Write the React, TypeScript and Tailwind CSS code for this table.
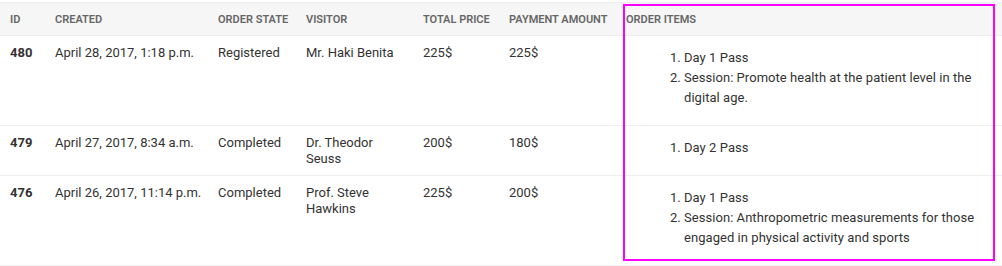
import clsx from 'clsx'

// ─── Data ─────────────────────────────────────────────────────────────────────

interface Order {
  id: number
  created: string
  state: string
  visitor: string
  total: string
  paid: string
  items: string[]
}

const orders: Order[] = [
  {
    id: 480,
    created: 'April 28, 2017, 1:18 p.m.',
    state: 'Registered',
    visitor: 'Mr. Haki Benita',
    total: '225$',
    paid: '225$',
    items: ['Day 1 Pass', 'Session: Promote health at the patient level in the digital age.'],
  },
  {
    id: 479,
    created: 'April 27, 2017, 8:34 a.m.',
    state: 'Completed',
    visitor: 'Dr. Theodor Seuss',
    total: '200$',
    paid: '180$',
    items: ['Day 2 Pass'],
  },
  {
    id: 476,
    created: 'April 26, 2017, 11:14 p.m.',
    state: 'Completed',
    visitor: 'Prof. Steve Hawkins',
    total: '225$',
    paid: '200$',
    items: [
      'Day 1 Pass',
      'Session: Anthropometric measurements for those engaged in physical activity and sports',
    ],
  },
]

const columns = [
  { label: 'Id', w: 'w-[45px]' },
  { label: 'Created', w: 'w-[163px]' },
  { label: 'Order state', w: 'w-[88px]' },
  { label: 'Visitor', w: 'w-[117px]' },
  { label: 'Total price', w: 'w-[86px]' },
  { label: 'Payment amount', w: 'w-[117px]' },
  { label: 'Order items', w: '' },
]

const cell = 'px-[10px] pt-[9px] pb-[7px]'

// ─── Main Component ───────────────────────────────────────────────────────────

export default function App() {
  return (
    <div className="relative w-[1002px] h-[266px] bg-white font-['Roboto',sans-serif] text-[13px] text-[#333]">
      <table className="mt-[2px] w-full table-fixed border-collapse border-t border-[#eee]">
        <colgroup>
          {columns.map((c) => (
            <col key={c.label} className={c.w} />
          ))}
        </colgroup>
        <thead>
          <tr className="bg-[#f6f6f6] border-b border-[#eee]">
            {columns.map((c) => (
              <th
                key={c.label}
                className={clsx(cell, 'text-left text-[11px] leading-[16px] font-semibold uppercase text-[#666] whitespace-nowrap')}
              >
                {c.label}
              </th>
            ))}
          </tr>
        </thead>
        <tbody>
          {orders.map((o) => (
            <tr key={o.id} className="border-b border-[#eee] align-top leading-[16px]">
              <th className={clsx(cell, 'text-left font-bold')}>{o.id}</th>
              <td className={clsx(cell, 'whitespace-nowrap')}>{o.created}</td>
              <td className={cell}>{o.state}</td>
              <td className={cell}>{o.visitor}</td>
              <td className={cell}>{o.total}</td>
              <td className={cell}>{o.paid}</td>
              <td className={cell}>
                <ol className="list-decimal mt-[3px] mb-[10px] pl-[58px] leading-[20px] tracking-[0.05px]">
                  {o.items.map((it) => (
                    <li key={it}>{it}</li>
                  ))}
                </ol>
              </td>
            </tr>
          ))}
        </tbody>
      </table>

      {/* Highlight box */}
      <div className="absolute left-[623px] top-[2px] w-[372px] h-[257px] border-2 border-[#ff00ff] pointer-events-none" />
    </div>
  )
}
